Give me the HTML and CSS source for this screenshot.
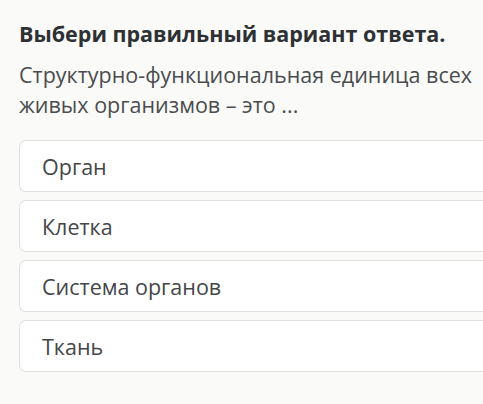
FILE: index.html
```html
<!DOCTYPE html>
<html lang="ru">
<head>
<meta charset="utf-8">
<link rel="stylesheet" href="styles.css">
</head>
<body>
<div class="quiz">
  <h1 class="title">Выбери правильный вариант ответа.</h1>
  <p class="question">Структурно-функциональная единица всех живых организмов – это ...</p>
  <div class="options">
    <div class="option">Орган</div>
    <div class="option">Клетка</div>
    <div class="option">Система органов</div>
    <div class="option">Ткань</div>
  </div>
</div>
</body>
</html>
```
FILE: styles.css
```css
html, body {
  margin: 0;
  padding: 0;
  background: #fafaf8;
  overflow: hidden;
}
body {
  font-family: "Open Sans", "DejaVu Sans", sans-serif;
}
.quiz {
  padding: 18px 0 0 19px;
}
.title {
  margin: 0;
  font-size: 21.5px;
  font-weight: 700;
  line-height: 32px;
  color: #2e3134;
}
.question {
  margin: 10px 0 0 0;
  font-size: 21.5px;
  line-height: 30px;
  color: #4a4c4e;
}
.options {
  margin-top: 20px;
  display: flex;
  flex-direction: column;
  gap: 8px;
}
.option {
  height: 50px;
  display: flex;
  align-items: center;
  padding-left: 22px;
  background: #fff;
  border: 1px solid #dedfde;
  border-right: none;
  border-radius: 7px 0 0 7px;
  font-size: 21.5px;
  color: #444648;
}
```
